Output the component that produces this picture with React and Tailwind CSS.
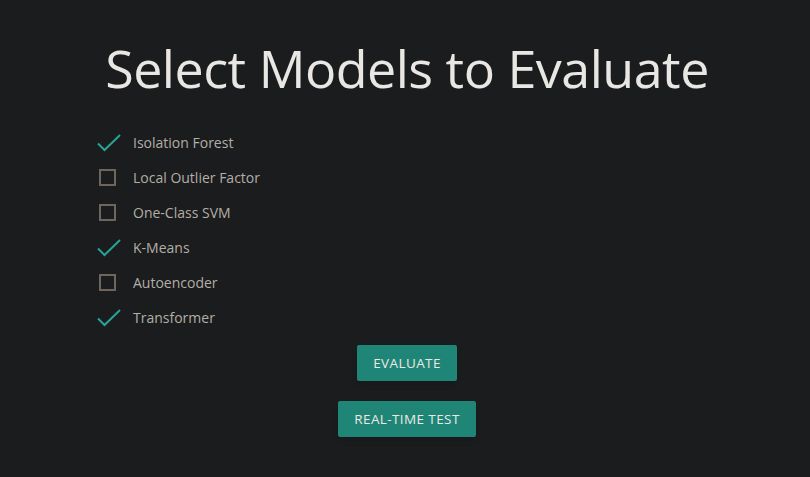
const models = [
  { name: 'Isolation Forest', checked: true },
  { name: 'Local Outlier Factor', checked: false },
  { name: 'One-Class SVM', checked: false },
  { name: 'K-Means', checked: true },
  { name: 'Autoencoder', checked: false },
  { name: 'Transformer', checked: true },
]

function Check() {
  return (
    <svg width="26" height="20" viewBox="0 0 26 20" fill="none">
      <path d="M2 10.5 L8.5 17 L24 2" stroke="#26a497" strokeWidth="2" />
    </svg>
  )
}

export default function App() {
  return (
    <div
      className="min-h-[477px] w-full bg-[#1b1c1e] flex flex-col items-center pl-1"
      style={{ fontFamily: '"Open Sans", "Noto Sans", sans-serif' }}
    >
      <h1 className="mt-[32px] text-[52px] leading-[72px] text-[#e9e7e3] tracking-[-0.5px]">
        Select Models to Evaluate
      </h1>

      <div className="self-start ml-[92px] mt-[21px] flex flex-col">
        {models.map((m) => (
          <label key={m.name} className="flex items-center h-[35px]">
            <span className="w-[37px] flex items-center">
              {m.checked ? (
                <Check />
              ) : (
                <span className="ml-[3px] w-[17px] h-[17px] border-2 border-[#6e665d]" />
              )}
            </span>
            <span className="text-[14px] text-[#b3aea6]">{m.name}</span>
          </label>
        ))}
      </div>

      <button className="mt-[10px] h-[36px] px-[16px] bg-[#1f8577] text-[#ebe9e4] text-[13.5px] tracking-[0.4px] rounded-[2px] shadow-md">
        EVALUATE
      </button>
      <button className="mt-[20px] h-[36px] px-[16px] bg-[#1f8577] text-[#ebe9e4] text-[13.5px] tracking-[0.4px] rounded-[2px] shadow-md">
        REAL-TIME TEST
      </button>
    </div>
  )
}
